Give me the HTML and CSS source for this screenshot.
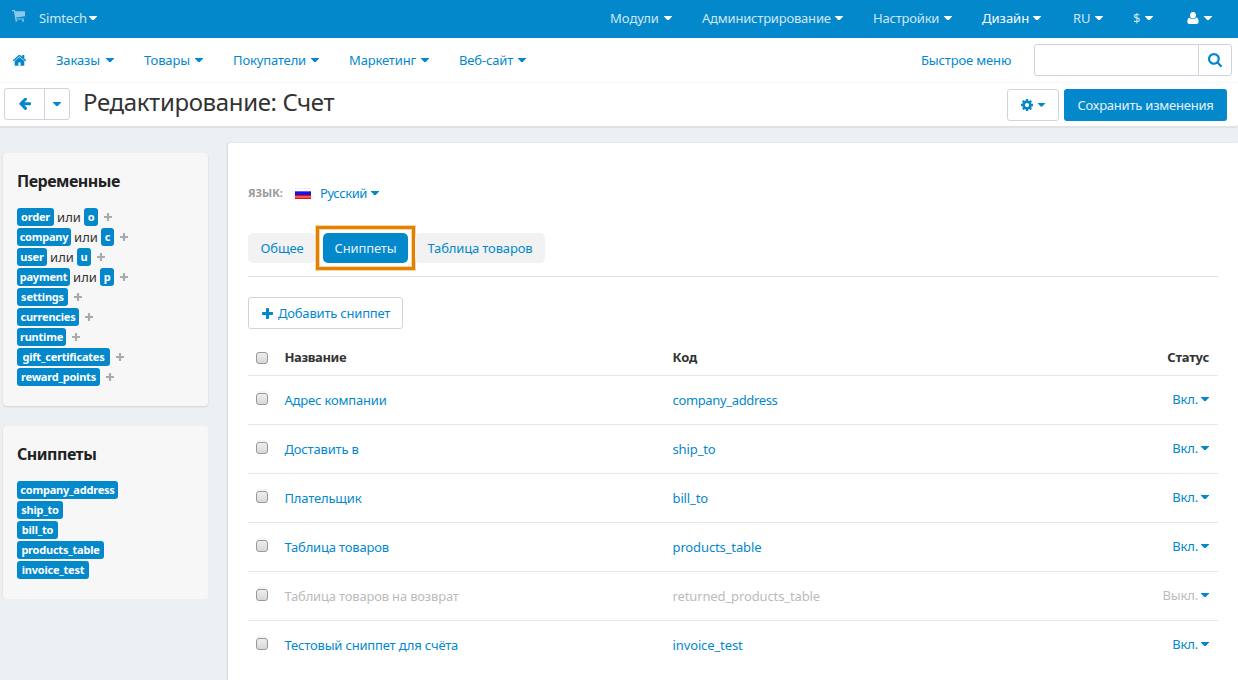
FILE: index.html
```html
<!DOCTYPE html>
<html lang="ru">
<head>
<meta charset="utf-8">
<title>Редактирование: Счет</title>
<link rel="stylesheet" href="styles.css">
</head>
<body>
<svg width="0" height="0" class="defs">
  <symbol id="plus" viewBox="192 128 1408 1408"><path d="M1600 736v192q0 40-28 68t-68 28h-416v416q0 40-28 68t-68 28h-192q-40 0-68-28t-28-68v-416h-416q-40 0-68-28t-28-68v-192q0-40 28-68t68-28h416v-416q0-40 28-68t68-28h192q40 0 68 28t28 68v416h416q40 0 68 28t28 68z"/></symbol>
</svg>
<header class="topbar">
  <svg class="cart" width="14" height="12" viewBox="0 0 14 12"><path d="M0 0h2.800l.4 1.300H13v5L4.200 7.500l.2 1H12v1.100H3.200L1.900 1.200H0z"/><circle cx="4.300" cy="10.700" r="1"/><circle cx="11" cy="10.700" r="1"/></svg>
  <a class="brand"><span>Simtech</span><i class="caret"></i></a>
  <nav class="topnav">
    <a class="t1"><span>Модули</span><i class="caret"></i></a>
    <a class="t2"><span>Администрирование</span><i class="caret"></i></a>
    <a class="t3"><span>Настройки</span><i class="caret"></i></a>
    <a class="t4 active"><span>Дизайн</span><i class="caret"></i></a>
    <a class="t5"><span>RU</span><i class="caret"></i></a>
    <a class="t6"><span>$</span><i class="caret"></i></a>
    <a class="t7"><svg width="12" height="12" viewBox="0 0 12 12"><ellipse cx="6" cy="3.300" rx="2.900" ry="3.300"/><path d="M2.600 5.600C.8 6 .4 8 .4 10c0 1.300.8 2 2 2h7.200c1.200 0 2-.7 2-2 0-2-.4-4-2.200-4.400C8.500 6.700 7.400 7.300 6 7.300s-2.500-.6-3.400-1.700z"/></svg><i class="caret"></i></a>
  </nav>
</header>
<div class="menubar">
  <svg class="home" width="14" height="12" viewBox="60 190 1670 1346"><path d="M1408 992v480q0 26-19 45t-45 19h-384v-384h-256v384h-384q-26 0-45-19t-19-45v-480q0-1 .5-3t.5-3l575-474 575 474q1 2 1 6zm223-69l-62 74q-8 9-21 11h-3q-13 0-21-7l-692-577-692 577q-12 8-24 7-13-2-21-11l-62-74q-8-10-7-23.500t11-21.500l719-599q32-26 76-26t76 26l244 204v-195q0-14 9-23t23-9h192q14 0 23 9t9 23v408l219 182q10 8 11 21.500t-7 23.500z"/></svg>
  <nav class="mainnav">
    <a class="m1"><span>Заказы</span><i class="caret"></i></a>
    <a class="m2"><span>Товары</span><i class="caret"></i></a>
    <a class="m3"><span>Покупатели</span><i class="caret"></i></a>
    <a class="m4"><span>Маркетинг</span><i class="caret"></i></a>
    <a class="m5"><span>Веб-сайт</span><i class="caret"></i></a>
  </nav>
  <a class="quick">Быстрое меню</a>
  <div class="search"><div class="field"></div><div class="go"><svg width="14" height="14" viewBox="64 128 1664 1664"><path d="M1216 832q0-185-131.500-316.500t-316.500-131.500-316.500 131.500-131.500 316.500 131.500 316.500 316.500 131.500 316.500-131.500 131.500-316.500zm512 832q0 52-38 90t-90 38q-54 0-90-38l-343-342q-179 124-399 124-143 0-273.500-55.500t-225-150-150-225-55.500-273.500 55.500-273.500 150-225 225-150 273.500-55.500 273.500 55.500 225 150 150 225 55.500 273.500q0 220-124 399l343 343q37 37 37 90z"/></svg></div></div>
</div>
<div class="titlebar">
  <div class="back"><div class="back-arrow"><svg width="12" height="12.500" viewBox="160 240 1504 1568"><path d="M1664 896v128q0 53-32.500 90.500t-84.500 37.500h-704l293 294q38 36 38 90t-38 90l-75 76q-37 37-90 37-52 0-91-37l-651-652q-37-37-37-90 0-52 37-91l651-650q38-38 91-38 52 0 90 38l75 74q38 38 38 91t-38 91l-293 293h704q52 0 84.500 37.500t32.500 90.500z"/></svg></div><div class="back-more"><i class="caret"></i></div></div>
  <h1>Редактирование: Счет</h1>
  <div class="gear"><svg width="12" height="12" viewBox="128 128 1536 1536"><path d="M1152 896q0-106-75-181t-181-75-181 75-75 181 75 181 181 75 181-75 75-181zm512-109v222q0 12-8 23t-20 13l-185 28q-19 54-39 91 35 50 107 138 10 12 10 25t-9 23q-27 37-99 108t-94 71q-12 0-26-9l-138-108q-44 23-91 38-16 136-29 186-7 28-36 28h-222q-14 0-24.500-8.500t-11.500-21.500l-28-184q-49-16-90-37l-141 107q-10 9-25 9-14 0-25-11-126-114-165-168-7-10-7-23 0-12 8-23 15-21 51-66.500t54-70.500q-27-50-41-99l-183-27q-13-2-21-12.500t-8-23.500v-222q0-12 8-23t19-13l186-28q14-46 39-92-40-57-107-138-10-12-10-24 0-10 9-23 26-36 98.500-107.500t94.500-71.500q13 0 26 10l138 107q44-23 91-38 16-136 29-186 7-28 36-28h222q14 0 24.500 8.500t11.500 21.500l28 184q49 16 90 37l142-107q9-9 24-9 13 0 25 10 129 119 165 170 7 8 7 22 0 12-8 23-15 21-51 66.500t-54 70.500q26 50 41 98l183 28q13 2 21 12.500t8 23.500z"/></svg><i class="caret"></i></div>
  <a class="save">Сохранить изменения</a>
</div>
<main class="page">
  <aside class="sidebar">
    <section class="box vars">
      <h2>Переменные</h2>
      <div class="line"><b style="width:37px">order</b><span>или</span><b style="width:14px">o</b><svg><use href="#plus"/></svg></div>
      <div class="line"><b style="width:54px">company</b><span>или</span><b style="width:13px">c</b><svg><use href="#plus"/></svg></div>
      <div class="line"><b style="width:30px">user</b><span>или</span><b style="width:14px">u</b><svg><use href="#plus"/></svg></div>
      <div class="line"><b style="width:53px">payment</b><span>или</span><b style="width:14px">p</b><svg><use href="#plus"/></svg></div>
      <div class="line"><b style="width:51px">settings</b><svg><use href="#plus"/></svg></div>
      <div class="line"><b style="width:62px">currencies</b><svg><use href="#plus"/></svg></div>
      <div class="line"><b style="width:49px">runtime</b><svg><use href="#plus"/></svg></div>
      <div class="line"><b style="width:93px">gift_certificates</b><svg><use href="#plus"/></svg></div>
      <div class="line"><b style="width:83px">reward_points</b><svg><use href="#plus"/></svg></div>
    </section>
    <section class="box snips">
      <h2>Сниппеты</h2>
      <div class="line"><b style="width:101px">company_address</b></div>
      <div class="line"><b style="width:46px">ship_to</b></div>
      <div class="line"><b style="width:41px">bill_to</b></div>
      <div class="line"><b style="width:87px">products_table</b></div>
      <div class="line"><b style="width:72px">invoice_test</b></div>
    </section>
  </aside>
  <section class="content">
    <div class="language"><span class="label">ЯЗЫК:</span><i class="flag"></i><a><span>Русский</span><i class="caret"></i></a></div>
    <div class="tabs"><a class="tab first">Общее</a><div class="highlight"><a class="tab selected">Сниппеты</a></div><a class="tab last">Таблица товаров</a></div>
    <a class="add"><svg width="11" height="11"><use href="#plus"/></svg><span>Добавить сниппет</span></a>
    <div class="table">
      <div class="row head"><i class="check"></i><span class="name">Название</span><span class="code">Код</span><span class="status">Статус</span></div>
      <div class="row"><i class="check"></i><a class="name">Адрес компании</a><a class="code wide">company_address</a><a class="status"><span>Вкл.</span><i class="caret"></i></a></div>
      <div class="row"><i class="check"></i><a class="name">Доставить в</a><a class="code">ship_to</a><a class="status"><span>Вкл.</span><i class="caret"></i></a></div>
      <div class="row"><i class="check"></i><a class="name">Плательщик</a><a class="code">bill_to</a><a class="status"><span>Вкл.</span><i class="caret"></i></a></div>
      <div class="row"><i class="check"></i><a class="name">Таблица товаров</a><a class="code">products_table</a><a class="status"><span>Вкл.</span><i class="caret"></i></a></div>
      <div class="row off"><i class="check"></i><a class="name">Таблица товаров на возврат</a><a class="code">returned_products_table</a><a class="status"><span>Выкл.</span><i class="caret"></i></a></div>
      <div class="row"><i class="check"></i><a class="name">Тестовый сниппет для счёта</a><a class="code">invoice_test</a><a class="status"><span>Вкл.</span><i class="caret"></i></a></div>
    </div>
  </section>
</main>
</body>
</html>
```
FILE: styles.css
```css
* { box-sizing: border-box; }
body { margin: 0; height: 680px; overflow: hidden; background: #ecf0f3; color: #0388cc; font: 13px/20px "Noto Sans", "Open Sans", sans-serif; white-space: nowrap; }
svg { fill: currentColor; flex: none; display: block; }
.defs { position: absolute; }
.caret { width: 8px; height: 4px; flex: none; background: currentColor; clip-path: polygon(0 0, 100% 0, 100% 15%, 60% 100%, 40% 100%, 0 15%); }

.topbar { height: 38px; background: #0388cc; color: #cfe7f5; display: flex; align-items: center; padding: 0 26px 2px 12px; }
.topbar .caret { background: #fff; }
.cart { color: #8dc8e8; margin-top: -4px; }
.brand { display: flex; align-items: center; justify-content: space-between; width: 58px; margin-left: 13px; letter-spacing: -.15px; }
.topnav { display: flex; margin-left: auto; gap: 30px; }
.topnav a { display: flex; align-items: center; justify-content: space-between; }
.t1 { width: 62px; }
.t2 { width: 141px; letter-spacing: -.2px; }
.t3 { width: 79px; letter-spacing: -.2px; }
.t4 { width: 59px; margin-right: 2px; }
.t5 { width: 30px; }
.t6 { width: 20px; }
.t7 { width: 25px; margin-left: 4px; }
.topbar .active, .t7 { color: #fff; }

.menubar { height: 45px; background: #fff; border-bottom: 1px solid #f7f7f7; display: flex; align-items: center; padding: 0 6px 0 13px; }
.mainnav { display: flex; gap: 30px; margin-left: 29px; letter-spacing: -.15px; }
.mainnav a { display: flex; align-items: center; justify-content: space-between; }
.m1 { width: 58px; }
.m2 { width: 59px; }
.m3 { width: 86px; }
.m4 { width: 80px; }
.m5 { width: 67px; }
.quick { width: 92px; margin-left: auto; letter-spacing: -.15px; }
.search { width: 198px; height: 32px; margin-left: 21px; border: 1px solid #ccd5de; border-radius: 3px; display: flex; }
.field { flex: 1; }
.go { width: 33px; border-left: 1px solid #ccd5de; display: flex; align-items: center; justify-content: center; }

.titlebar { height: 45px; background: #fff; border-bottom: 2px solid #e0e2e3; display: flex; align-items: center; padding: 0 11px 1px 4px; border-bottom-right-radius: 4px; }
.back { width: 66px; height: 32px; border: 1px solid #ccd5de; border-radius: 3px; display: flex; }
.back div { display: flex; align-items: center; justify-content: center; }
.back-arrow { width: 40px; border-right: 1px solid #ccd5de; }
.back-more { width: 24px; }
h1 { margin: 0 0 4px 13px; color: #333; font-size: 24px; line-height: 36px; font-weight: 400; letter-spacing: -.36px; }
.gear { width: 52px; height: 32px; margin: 1px 5px 0 auto; border: 1px solid #ccd5de; border-radius: 3px; display: flex; align-items: center; justify-content: center; gap: 5px; }
.save { width: 163px; height: 32px; margin-top: 1px; border-radius: 3px; background: #0388cc; color: #e6f3fa; line-height: 32px; text-align: center; letter-spacing: -.22px; }

.page { display: flex; gap: 20px; align-items: flex-start; height: 552px; }
.sidebar { width: 208px; padding: 25px 0 0 3px; }
.box { background: #f7f7f7; border-radius: 4px; box-shadow: 0 1px 2px rgba(0,0,0,.12); padding: 18px 14px 0; }
.vars { height: 253px; margin-bottom: 20px; }
.snips { height: 173px; box-shadow: -1px 0 1px rgba(0,0,0,.04); }
h2 { margin: 0 0 16px; color: #222; font-size: 16px; line-height: 20px; font-weight: 700; letter-spacing: -.5px; }
.line { height: 20px; display: flex; align-items: center; }
.line b { height: 18px; background: #0388cc; color: #fff; font-size: 11px; line-height: 17px; border-radius: 3px; text-align: center; letter-spacing: -.22px; }
.line span { width: 30px; color: #333; text-align: center; line-height: 18px; margin-top: -1px; }
.line svg { width: 8px; height: 8px; color: #aaa; margin-left: 6px; }

.content { width: 1010px; height: 538px; margin-top: 15px; background: #fff; border-radius: 3px 0 0 0; box-shadow: -1px 0 2px rgba(0,0,0,.1); padding: 40px 20px 0; }
.language { display: flex; align-items: center; height: 20px; }
.label { width: 47px; color: #999; font-size: 11px; font-weight: 700; }
.flag { width: 16px; height: 11px; background: linear-gradient(#f0f0f8 0 1px, #fff 1px 3px, #6060f8 3px 4px, #1414e0 4px 7px, #e01010 7px 8px, #ff5050 8px 10px, #e01010 10px); }
.language a { display: flex; align-items: center; justify-content: space-between; width: 59px; margin-left: 9px; letter-spacing: -.4px; }
.tabs { display: flex; align-items: center; height: 51px; margin: 23px 0 0; padding-bottom: 7px; background: linear-gradient(#dfe4e9, #dfe4e9) 0 100% / 100% 1px no-repeat; }
.tab { height: 30px; line-height: 30px; border-radius: 5px; background: #f2f2f2; text-align: center; letter-spacing: -.15px; }
.first { width: 68px; }
.highlight { width: 99px; height: 44px; border: 3px solid #e38200; padding: 4px; box-shadow: 0 0 0 1px #f7d5a5, inset 0 0 0 1px #f7d5a5; }
.selected { display: block; width: 85px; background: #0388cc; color: #e6f3fa; }
.last { width: 130px; }
.add { display: flex; align-items: center; width: 155px; height: 32px; margin-top: 20px; border: 1px solid #ccd5de; border-radius: 3px; padding-left: 13px; gap: 5px; letter-spacing: -.2px; }
.table { margin-top: 10px; }
.row { height: 49px; border-bottom: 1px solid #e8e8e8; display: grid; grid-template-columns: 36.500px 388px 1fr 90px; align-items: center; padding-right: 9px; letter-spacing: -.18px; }
.row:last-child { height: 48px; border-bottom: 0; }
.head { height: 37px; color: #333; font-weight: 700; letter-spacing: -.4px; }
.head .status { letter-spacing: -.2px; }
.wide { letter-spacing: -.35px; }
.code:not(.wide) { letter-spacing: -.12px; }
.check { width: 12px; height: 12px; margin-left: 8px; border: 1px solid #999; border-radius: 3px; background: linear-gradient(#eee, #d8d8d8); }
.head .check { margin-top: 2px; }
.row:not(.head) .check { margin-top: -3px; box-shadow: 0 -3px 0 -1px #f3f3f3; }
.status { display: flex; align-items: center; justify-content: flex-end; gap: 3px; }
.row:not(.head) .status { margin-top: -2px; }
.off .name, .off .code, .off .status span { color: #bbb; }
```
